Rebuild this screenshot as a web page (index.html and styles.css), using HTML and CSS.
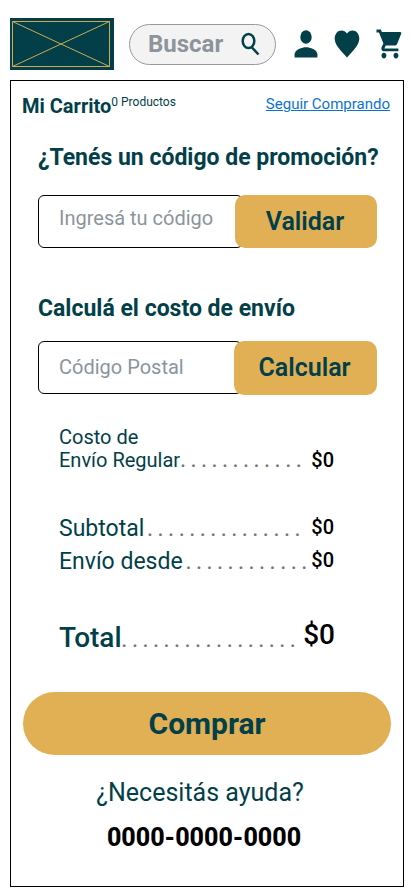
FILE: index.html
```html
<!DOCTYPE html>
<html lang="es">
<head>
<meta charset="utf-8">
<meta name="viewport" content="width=device-width, initial-scale=1">
<title>Mi Carrito</title>
<link rel="stylesheet" href="styles.css">
</head>
<body>
<header class="topbar">
  <a class="logo" href="#" aria-label="Inicio">
    <svg width="104" height="52" viewBox="0 0 104 52"><path d="M2.5 3.5h97v45h-97zM2.5 3.5l97 45M99.500 3.500l-97 45"/></svg>
  </a>
  <form class="search">
    <input class="search-input" type="search" placeholder="Buscar" aria-label="Buscar">
    <button class="search-button" type="submit" aria-label="Buscar">
      <svg width="20" height="24" viewBox="0 0 20 24"><ellipse cx="7.500" cy="9" rx="5.800" ry="7"/><path d="M11 15.500L17.500 22.500"/></svg>
    </button>
  </form>
  <nav class="actions">
    <a href="#" aria-label="Mi cuenta"><svg width="24" height="28" viewBox="0 0 24 28"><ellipse cx="12" cy="7" rx="5.700" ry="6.800"/><path d="M.6 27.500v-3.300c0-4.600 7.600-7 11.400-7s11.400 2.400 11.400 7v3.300z"/></svg></a>
    <a href="#" aria-label="Favoritos"><svg width="26" height="28" viewBox="0 0 26 28"><path d="M13 27.500l-1.800-1.900C4.800 18.700.7 14.200.7 8.600.7 4 3.700.5 7.500.5c2.100 0 4.200 1.200 5.500 3.100C14.300 1.700 16.400.5 18.500.5c3.800 0 6.800 3.500 6.800 8.100 0 5.600-4.100 10.100-10.500 17z"/></svg></a>
    <a href="#" aria-label="Carrito"><svg width="26" height="30" viewBox="0 0 26 30"><path d="M.5.500v2.900h2.500l4.400 11.100-1.700 3.500c-.9 2 .3 4.300 2.200 4.300h14.500v-2.900H8.400l1.300-2.800h9.200c1 0 1.800-.6 2.200-1.500L25.200 4.800c.4-.8-.1-1.800-1-1.800H5.900L4.800.5zM7.900 23.700c-1.400 0-2.400 1.300-2.400 2.800s1 2.900 2.400 2.900 2.500-1.300 2.500-2.900-1.100-2.800-2.500-2.800zm12 0c-1.400 0-2.400 1.300-2.400 2.800s1 2.900 2.400 2.900 2.500-1.300 2.500-2.900-1.100-2.800-2.500-2.800z"/></svg></a>
  </nav>
</header>

<main class="cart">
  <div class="cart-head">
    <h1 class="cart-title">Mi Carrito</h1>
    <span class="cart-count">0 Productos</span>
    <a class="continue" href="#">Seguir Comprando</a>
  </div>

  <form class="block promo">
    <label class="block-title" for="promo">¿Tenés un código de promoción?</label>
    <div class="field">
      <input class="field-input" id="promo" type="text" placeholder="Ingresá tu código">
      <button class="field-button" type="button">Validar</button>
    </div>
  </form>

  <form class="block shipping">
    <label class="block-title" for="zip">Calculá el costo de envío</label>
    <div class="field">
      <input class="field-input" id="zip" type="text" placeholder="Código Postal">
      <button class="field-button" type="button">Calcular</button>
    </div>
  </form>

  <dl class="summary">
    <div class="row regular"><dt>Costo de<br>Envío Regular</dt><span class="dots" aria-hidden="true">. . . . . . . . . . . .</span><dd>$0</dd></div>
    <div class="row line"><dt>Subtotal</dt><span class="dots" aria-hidden="true">. . . . . . . . . . . . . . .</span><dd>$0</dd></div>
    <div class="row line"><dt>Envío desde</dt><span class="dots" aria-hidden="true">. . . . . . . . . . . .</span><dd>$0</dd></div>
    <div class="row total"><dt>Total</dt><span class="dots" aria-hidden="true">. . . . . . . . . . . . . . . . .</span><dd>$0</dd></div>
  </dl>

  <button class="buy" type="button">Comprar</button>

  <p class="help">¿Necesitás ayuda?</p>
  <a class="phone" href="tel:000000000000">0000-0000-0000</a>
</main>
</body>
</html>
```
FILE: styles.css
```css
:root {
  --teal: #023f49;
  --gold: #e1b055;
  --gray: #8d949c;
}

* {
  box-sizing: border-box;
}

body {
  margin: 0;
  padding: 18px 10px 8px;
  background: #fff;
  color: var(--teal);
  font-family: Roboto, "Liberation Sans", sans-serif;
}

svg {
  display: block;
}

input,
button {
  font-family: inherit;
  color: var(--teal);
}

input::placeholder {
  color: var(--gray);
  opacity: 1;
}

.topbar {
  display: flex;
  align-items: center;
  gap: 15px;
  height: 52px;
  padding-right: 2px;
}

.logo {
  flex: none;
  background: var(--teal);
}

.logo svg {
  fill: none;
  stroke: #d0a951;
}

.search {
  flex: 1;
  min-width: 0;
  height: 41px;
  display: flex;
  align-items: center;
  padding: 0 14px 0 18px;
  border: 1px solid #999;
  border-radius: 21px;
  background: #f3f3f3;
}

.search-input {
  flex: 1;
  min-width: 0;
  padding: 0;
  border: 0;
  background: none;
  font-size: 24px;
  line-height: 28px;
  font-weight: 700;
}

.search-input::-webkit-search-cancel-button {
  display: none;
}

.search-button {
  flex: none;
  padding: 0;
  border: 0;
  background: none;
}

.search-button svg {
  fill: none;
  stroke: var(--teal);
  stroke-width: 2.500;
}

.actions {
  display: flex;
  align-items: center;
  gap: 16px;
  padding-left: 3px;
}

.actions svg {
  fill: var(--teal);
}

.cart {
  margin-top: 10px;
  padding: 12px 12px 33px;
  border: 1px solid #000;
}

.cart-head {
  display: flex;
  align-items: flex-start;
}

.cart-title {
  margin: 0 0 0 -1px;
  font-size: 20px;
  line-height: 26px;
  font-weight: 700;
}

.cart-count {
  font-size: 12px;
  line-height: 18px;
}

.continue {
  margin: 0 1px 0 auto;
  color: #0b74d1;
  font-size: 15px;
  line-height: 22px;
  text-decoration-thickness: 1px;
}

.block {
  padding-left: 15px;
}

.promo {
  margin-top: 25px;
}

.shipping {
  margin-top: 47px;
}

.block-title {
  display: block;
  font-size: 23px;
  line-height: 28px;
  font-weight: 700;
}

.field {
  display: flex;
  margin: 23px 14px 0 0;
}

.shipping .field {
  margin-top: 18px;
}

.field-input {
  flex: 1;
  min-width: 0;
  height: 53px;
  margin-right: -8px;
  padding: 0 8px 8px 20px;
  border: 1px solid #000;
  border-radius: 6px;
  background: #fff;
  font-size: 20px;
}

.shipping .field-input {
  padding-bottom: 2px;
}

.field-button {
  position: relative;
  width: 142px;
  height: 53px;
  padding: 0 2px 0 0;
  border: 0;
  border-radius: 10px;
  background: var(--gold);
  font-size: 25px;
  font-weight: 600;
}

.shipping .field-button {
  width: 143px;
  height: 54px;
  padding-bottom: 2px;
}

.summary {
  margin: 31px 56px 0 36px;
}

.row {
  display: flex;
  align-items: baseline;
  height: 33px;
  font-size: 23px;
  line-height: 33px;
}

.row dt {
  flex: none;
}

.row dd {
  margin: 0 1px 0 auto;
  color: #000;
  font-size: 20px;
  font-weight: 500;
}

.line dd {
  align-self: flex-start;
  line-height: 30px;
}

.dots {
  flex: 1;
  overflow: hidden;
  white-space: nowrap;
  color: #777;
  font-size: 20px;
  font-weight: 500;
}

.line .dots {
  padding-left: 3px;
}

.regular {
  align-items: last baseline;
  height: auto;
  margin-bottom: 40px;
  font-size: 20px;
  line-height: 23px;
}

.total {
  margin-top: 43px;
  font-size: 28px;
  font-weight: 500;
}

.total dd {
  align-self: flex-start;
  margin-right: 0;
  font-size: 28px;
  line-height: 28px;
}

.buy {
  display: block;
  width: 100%;
  height: 63px;
  margin-top: 38px;
  border: 0;
  border-radius: 32px;
  background: var(--gold);
  font-size: 30px;
  font-weight: 700;
}

.help {
  margin: 22px 14px 0 0;
  font-size: 25px;
  line-height: 32px;
  text-align: center;
}

.phone {
  display: block;
  margin: 14px 6px 0 0;
  color: #000;
  font-size: 25px;
  line-height: 30px;
  font-weight: 800;
  text-align: center;
  text-decoration: none;
}
```
